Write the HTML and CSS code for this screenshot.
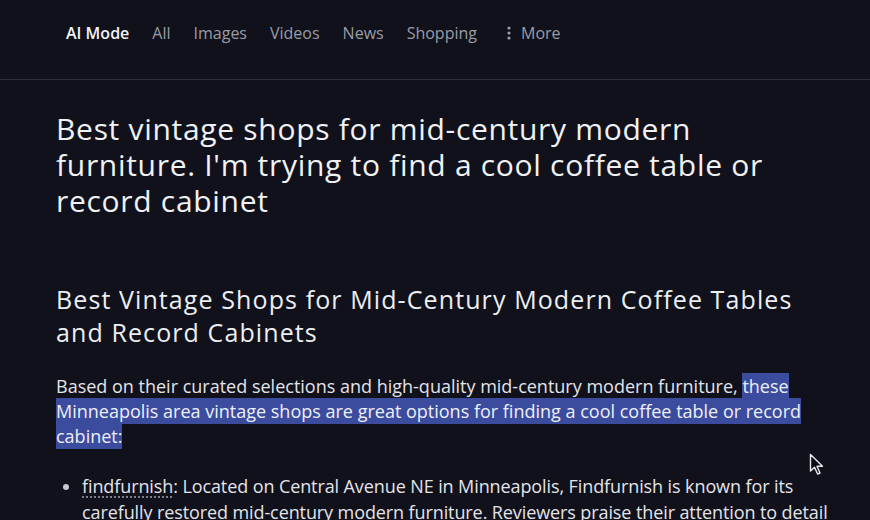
FILE: index.html
```html
<!DOCTYPE html>
<html lang="en">
<head>
<meta charset="utf-8">
<link rel="stylesheet" href="styles.css">
</head>
<body>
<header class="topbar">
  <nav class="tabs">
    <span class="tab active">AI Mode</span>
    <span class="tab">All</span>
    <span class="tab">Images</span>
    <span class="tab">Videos</span>
    <span class="tab">News</span>
    <span class="tab">Shopping</span>
    <span class="tab more"><svg class="dots" width="4" height="14" viewBox="0 0 4 14"><circle cx="2" cy="2" r="1.6"/><circle cx="2" cy="7" r="1.6"/><circle cx="2" cy="12" r="1.6"/></svg>More</span>
  </nav>
</header>
<main class="content">
  <h1 class="query">Best vintage shops for mid-century modern furniture. I'm trying to find a cool coffee table or record cabinet</h1>
  <h2 class="answer-title">Best Vintage Shops for Mid-Century Modern Coffee Tables and Record Cabinets</h2>
  <p class="intro">Based on their curated selections and high-quality mid-century modern furniture, <mark class="sel">these Minneapolis area vintage shops are great options for finding a cool coffee table or record cabinet:</mark></p>
  <ul class="shops">
    <li><span class="shop-name">findfurnish</span>: Located on Central Avenue NE in Minneapolis, Findfurnish is known for its carefully restored mid-century modern furniture. Reviewers praise their attention to detail</li>
  </ul>
</main>
<svg class="cursor" width="16" height="24" viewBox="0 0 16 24"><path d="M1.5 1.5 L1.5 18 L5.5 14.2 L8.6 21 L11 20 L8 13.3 L13.5 13.3 Z" fill="#0c0d14" stroke="#e8e8ee" stroke-width="1.4" stroke-linejoin="round"/></svg>
</body>
</html>
```
FILE: styles.css
```css
html, body {
  margin: 0;
  padding: 0;
  background: #10111b;
  color: #e6e7ec;
  font-family: "Open Sans", Roboto, sans-serif;
  overflow: hidden;
  height: 520px;
}
.topbar {
  height: 79px;
  border-bottom: 1px solid #2b2d38;
  display: flex;
  align-items: flex-start;
}
.tabs {
  display: flex;
  align-items: center;
  gap: 23px;
  margin: 23px 0 0 66px;
  height: 20px;
}
.tab {
  font-size: 16px;
  color: #9a9ca6;
  display: flex;
  align-items: center;
}
.tab.active {
  color: #f2f3f6;
  font-weight: 600;
}
.tab.more { gap: 10px; margin-left: 7px; }
.dots { fill: #9a9ca6; }
.content {
  padding: 31px 30px 0 56px;
}
.query {
  font-size: 30px;
  font-weight: 400;
  line-height: 36px;
  letter-spacing: 0.7px;
  margin: 0;
  color: #f0f1f4;
  max-width: 730px;
}
.answer-title {
  font-size: 25px;
  font-weight: 400;
  line-height: 33px;
  letter-spacing: 1.1px;
  margin: 64px 0 0;
  color: #eceef2;
  max-width: 770px;
}
.intro {
  font-size: 18px;
  line-height: 25px;
  margin: 25px 0 0;
  color: #e3e4ea;
  max-width: 760px;
}
.sel {
  background: #3b4b9e;
  color: #eef0f8;
  padding: 1px 0;
}
.shops {
  margin: 24px 0 0;
  padding: 0 0 0 26px;
  font-size: 18px;
  line-height: 26px;
  letter-spacing: -0.1px;
  color: #e3e4ea;
  max-width: 756px;
}
.shops li::marker { color: #c8c9d0; }
.shop-name {
  text-decoration: underline dotted #8a8c96;
  text-underline-offset: 4px;
}
.cursor {
  position: absolute;
  left: 809px;
  top: 453px;
}
```
